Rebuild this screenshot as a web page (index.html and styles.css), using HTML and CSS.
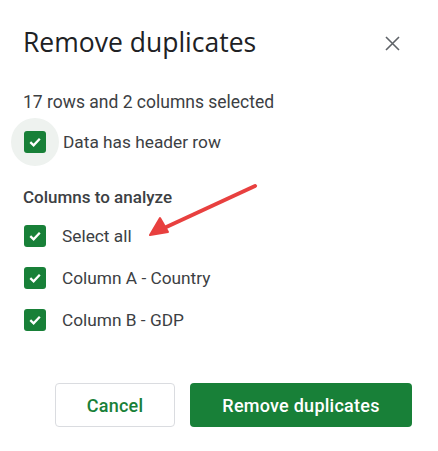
FILE: index.html
```html
<!DOCTYPE html>
<html>
<head>
<meta charset="utf-8">
<link rel="stylesheet" href="styles.css">
</head>
<body>
<div class="dialog">
  <div class="header">
    <h1 class="title">Remove duplicates</h1>
    <button class="close" aria-label="Close">
      <svg width="15" height="15" viewBox="0 0 15 15"><path d="M1 1L14 14M14 1L1 14" stroke="#5f6368" stroke-width="1.6" fill="none"/></svg>
    </button>
  </div>
  <p class="info">17 rows and 2 columns selected</p>
  <label class="row header-row">
    <span class="halo"><span class="box"><svg width="14" height="14" viewBox="0 0 14 14"><path d="M2.3 7.2L5.6 10.4L11.8 3.8" stroke="#fff" stroke-width="2.3" fill="none"/></svg></span></span>
    <span class="label">Data has header row</span>
  </label>
  <h2 class="section">Columns to analyze</h2>
  <div class="list">
    <label class="row">
      <span class="box"><svg width="14" height="14" viewBox="0 0 14 14"><path d="M2.3 7.2L5.6 10.4L11.8 3.8" stroke="#fff" stroke-width="2.3" fill="none"/></svg></span>
      <span class="label">Select all</span>
    </label>
    <label class="row">
      <span class="box"><svg width="14" height="14" viewBox="0 0 14 14"><path d="M2.3 7.2L5.6 10.4L11.8 3.8" stroke="#fff" stroke-width="2.3" fill="none"/></svg></span>
      <span class="label">Column A - Country</span>
    </label>
    <label class="row">
      <span class="box"><svg width="14" height="14" viewBox="0 0 14 14"><path d="M2.3 7.2L5.6 10.4L11.8 3.8" stroke="#fff" stroke-width="2.3" fill="none"/></svg></span>
      <span class="label">Column B - GDP</span>
    </label>
  </div>
  <div class="actions">
    <button class="btn cancel">Cancel</button>
    <button class="btn primary">Remove duplicates</button>
  </div>
  <svg class="arrow" width="120" height="60" viewBox="0 0 120 60">
    <path d="M107 4L14 47" stroke="#e8403f" stroke-width="4" stroke-linecap="round" fill="none"/>
    <path d="M2 53L12 36L20 50Z" fill="#e8403f" stroke="#e8403f" stroke-width="2" stroke-linejoin="round"/>
  </svg>
</div>
</body>
</html>
```
FILE: styles.css
```css
* { box-sizing: border-box; }
html, body { margin: 0; padding: 0; background: #fff; }
body { font-family: Roboto, "Noto Sans", Arial, sans-serif; color: #3c4043; }
.dialog { position: relative; width: 438px; height: 451px; padding: 22px 23px 0 23px; }
.header { display: flex; justify-content: space-between; align-items: center; height: 40px; }
.title { margin: 0; font-family: "Open Sans", Roboto, sans-serif; font-weight: 400; font-size: 26.5px; line-height: 32px; color: #202124; }
.close { border: 0; background: none; padding: 0; width: 15px; height: 15px; margin-right: 15px; margin-top: 2px; display: flex; }
.info { margin: 0; margin-top: 28px; font-size: 17.5px; line-height: 24px; color: #3c4043; }
.row { display: flex; align-items: center; height: 42px; }
.box { width: 22px; height: 22px; border-radius: 3px; background: #188038; display: flex; align-items: center; justify-content: center; margin-left: 1px; }
.halo { width: 48px; height: 48px; border-radius: 50%; background: #eef2ef; display: flex; align-items: center; justify-content: center; margin-left: -12px; margin-right: -12px; }
.halo .box { margin-left: 0; }
.header-row { height: 48px; margin-top: 4px; }
.label { margin-left: 16px; font-size: 17.3px; color: #3c4043; }
.section { margin: 19px 0 6px; font-size: 17px; font-weight: 500; line-height: 24px; color: #3c4043; }
.list { display: flex; flex-direction: column; }
.actions { display: flex; justify-content: flex-end; gap: 15px; margin-top: 42px; padding-right: 3px; }
.btn { height: 44px; border-radius: 4px; font-family: Roboto, sans-serif; font-size: 18px; font-weight: 500; letter-spacing: 0.25px; }
.cancel { width: 120px; background: #fff; border: 1px solid #dadce0; color: #188038; }
.primary { width: 222px; background: #188038; border: 0; color: #fff; }
.arrow { position: absolute; left: 148px; top: 182px; }
```
